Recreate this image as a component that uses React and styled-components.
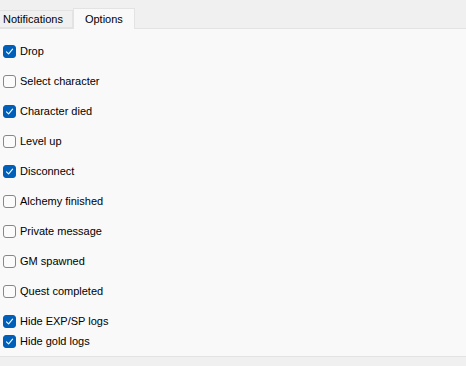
import React, { useState } from "react";
import styled, { createGlobalStyle } from "styled-components";

const GlobalStyle = createGlobalStyle`
	html, body {
		margin: 0;
		padding: 0;
		background: #f0f0f0;
	}
	body {
		font-family: "Liberation Sans", Arial, sans-serif;
		font-size: 11px;
		color: #000;
	}
`;

const options = [
	{ label: "Drop", checked: true },
	{ label: "Select character", checked: false },
	{ label: "Character died", checked: true },
	{ label: "Level up", checked: false },
	{ label: "Disconnect", checked: true },
	{ label: "Alchemy finished", checked: false },
	{ label: "Private message", checked: false },
	{ label: "GM spawned", checked: false },
	{ label: "Quest completed", checked: false },
	{ label: "Hide EXP/SP logs", checked: true },
	{ label: "Hide gold logs", checked: true, tight: true },
];

const App = () => {
	const [values, setValues] = useState(options.map((o) => o.checked));

	const toggle = (i) => {
		setValues((v) => v.map((x, j) => (j === i ? !x : x)));
	};

	return (
		<Window>
			<GlobalStyle />
			<TabStrip>
				<Tab>Notifications</Tab>
				<Tab $active>Options</Tab>
			</TabStrip>
			<Panel>
				{options.map((o, i) => (
					<Row key={o.label} $tight={o.tight} onClick={() => toggle(i)}>
						<Box $checked={values[i]}>
							{values[i] && (
								<svg width="9" height="9" viewBox="0 0 9 9">
									<path
										d="M1.5 4.8 L3.6 6.8 L7.6 2.2"
										fill="none"
										stroke="#fff"
										strokeWidth="1.1"
										strokeLinecap="round"
										strokeLinejoin="round"
									/>
								</svg>
							)}
						</Box>
						<Label>{o.label}</Label>
					</Row>
				))}
			</Panel>
		</Window>
	);
};

const Window = styled.div`
	width: 466px;
	height: 366px;
	background: #f0f0f0;
	overflow: hidden;
	display: flex;
	flex-direction: column;
`;

const TabStrip = styled.div`
	height: 28px;
	display: flex;
	align-items: flex-end;
	position: relative;
	z-index: 1;
`;

const Tab = styled.div`
	box-sizing: border-box;
	height: ${(p) => (p.$active ? "21px" : "18px")};
	margin-bottom: ${(p) => (p.$active ? "-1px" : "0")};
	padding: ${(p) => (p.$active ? "0 11px 1px 11px" : "0 9px 0 3px")};
	margin-left: ${(p) => (p.$active ? "0" : "-1px")};
	display: flex;
	align-items: center;
	background: ${(p) => (p.$active ? "#f9f9f9" : "#f0f0f0")};
	border: 1px solid #e3e3e3;
	border-bottom: ${(p) => (p.$active ? "none" : "1px solid #e3e3e3")};
	color: #000;
	cursor: default;
`;

const Panel = styled.div`
	box-sizing: border-box;
	height: 329px;
	background: #f9f9f9;
	border-top: 1px solid #e3e3e3;
	border-bottom: 1px solid #e3e3e3;
	padding: 12px 0 0 3px;
	display: flex;
	flex-direction: column;
`;

const Row = styled.div`
	height: 20px;
	margin-top: ${(p) => (p.$tight ? "0" : "10px")};
	&:first-child {
		margin-top: 0;
	}
	display: flex;
	align-items: center;
	gap: 4px;
	cursor: default;
	user-select: none;
`;

const Box = styled.div`
	box-sizing: border-box;
	width: 13px;
	height: 13px;
	border-radius: 3px;
	display: flex;
	align-items: center;
	justify-content: center;
	background: ${(p) => (p.$checked ? "#005fb8" : "#fbfbfb")};
	border: 1px solid ${(p) => (p.$checked ? "#005fb8" : "#878787")};
`;

const Label = styled.span`
	line-height: 16px;
`;

export default App;
